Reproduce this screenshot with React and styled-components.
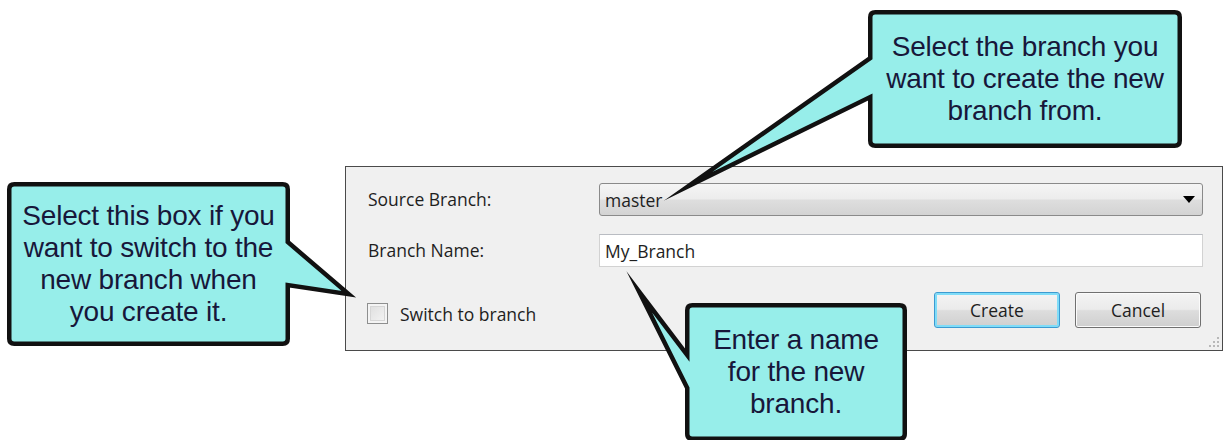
import React from "react";
import styled, { createGlobalStyle } from "styled-components";

const GlobalStyle = createGlobalStyle`
  html, body {
    margin: 0;
    padding: 0;
    background: #ffffff;
  }
  body {
    font-family: "Open Sans", "Liberation Sans", sans-serif;
  }
  * {
    box-sizing: border-box;
  }
`;

const Stage = styled.div`
  position: relative;
  width: 1225px;
  height: 440px;
  overflow: hidden;
  background: #ffffff;
  padding: 166px 0 0 345px;
`;

const Dialog = styled.div`
  position: relative;
  width: 878px;
  height: 185px;
  border: 1px solid #4a4a4a;
  background: #f0f0f0;
  padding: 16px 19px 0 22px;
  display: flex;
  flex-direction: column;
  font-size: 17.5px;
  color: #1e1e1e;
`;

const Fields = styled.div`
  display: grid;
  grid-template-columns: 231px 1fr;
  row-gap: 18px;
  align-items: center;
`;

const Label = styled.span`
  line-height: 1;
`;

const Combo = styled.div`
  height: 33px;
  border: 1px solid #8a8a8a;
  border-radius: 3px;
  background: linear-gradient(#f5f5f5 0%, #ececec 48%, #dedede 52%, #d3d3d3 100%);
  display: flex;
  align-items: center;
  justify-content: space-between;
  padding: 0 7px 0 5px;
`;

const Arrow = styled.span`
  width: 0;
  height: 0;
  border-left: 6px solid transparent;
  border-right: 6px solid transparent;
  border-top: 7px solid #000000;
`;

const TextBox = styled.div`
  height: 33px;
  background: #ffffff;
  border: 1px solid #d2d2d2;
  border-top-color: #b9bcc2;
  display: flex;
  align-items: center;
  padding-left: 5px;
`;

const Footer = styled.div`
  margin-top: 25px;
  display: flex;
  align-items: center;
  justify-content: space-between;
  padding-right: 2px;
`;

const CheckRow = styled.label`
  display: flex;
  align-items: center;
  gap: 12px;
  margin-left: -1px;
  padding-top: 7px;
`;

const CheckBox = styled.span`
  width: 21px;
  height: 21px;
  border: 1px solid #8e8f8f;
  background: linear-gradient(135deg, #dcdcdc, #f6f6f6);
  box-shadow: inset 0 0 0 2px #f4f4f4, inset 0 0 0 3px #d6d6d6;
`;

const Buttons = styled.div`
  display: flex;
  gap: 15px;
`;

const Button = styled.div`
  width: 126px;
  height: 36px;
  border-radius: 3px;
  border: 1px solid ${p => (p.$focused ? "#3c9ad0" : "#707070")};
  box-shadow: ${p =>
    p.$focused ? "inset 0 0 0 2px #7fdcf8" : "inset 0 0 0 1px #fbfbfb"};
  background: linear-gradient(#f4f4f4 0%, #ebebeb 48%, #dddddd 52%, #cfcfcf 100%);
  display: flex;
  align-items: center;
  justify-content: center;
`;

const Grip = styled.svg`
  position: absolute;
  right: 2px;
  bottom: 2px;
`;

const CalloutBox = styled.div`
  position: absolute;
  left: ${p => p.$x}px;
  top: ${p => p.$y}px;
  width: ${p => p.$w}px;
  height: ${p => p.$h}px;
  display: flex;
  align-items: center;
  justify-content: center;
  text-align: center;
  font-family: "Liberation Sans", Arial, sans-serif;
  font-size: 28px;
  line-height: 32px;
  letter-spacing: -0.2px;
  color: #17173a;
`;

const Bubble = styled.svg`
  position: absolute;
  left: 0;
  top: 0;
  overflow: visible;
`;

const CalloutText = styled.div`
  position: relative;
`;

const STROKE = 4.5;

// move the tip back so the miter spike ends on the measured point
function innerTip(tip, a, b, half) {
  const n = v => {
    const l = Math.hypot(v[0], v[1]);
    return [v[0] / l, v[1] / l];
  };
  const u1 = n([a[0] - tip[0], a[1] - tip[1]]);
  const u2 = n([b[0] - tip[0], b[1] - tip[1]]);
  const bis = n([u1[0] + u2[0], u1[1] + u2[1]]);
  const s = Math.abs(u1[0] * bis[1] - u1[1] * bis[0]);
  const ext = half / s;
  return [tip[0] + bis[0] * ext, tip[1] + bis[1] * ext];
}

function bubblePath(w, h, tail) {
  const i = STROKE / 2;
  const r = 5;
  const L = i, T = i, R = w - i, B = h - i;
  const edgeX = tail.side === "left" ? L : R;
  const tip = innerTip(tail.tip, [edgeX, tail.y1], [edgeX, tail.y2], i);
  let d = `M ${L + r} ${T} H ${R - r} Q ${R} ${T} ${R} ${T + r} `;
  if (tail.side === "right") {
    d += `V ${tail.y1} L ${tip[0]} ${tip[1]} L ${R} ${tail.y2} `;
  }
  d += `V ${B - r} Q ${R} ${B} ${R - r} ${B} H ${L + r} Q ${L} ${B} ${L} ${B - r} `;
  if (tail.side === "left") {
    d += `V ${tail.y2} L ${tip[0]} ${tip[1]} L ${L} ${tail.y1} `;
  }
  d += `V ${T + r} Q ${L} ${T} ${L + r} ${T} Z`;
  return d;
}

const Callout = ({ x, y, w, h, side, y1, y2, tip, children }) => {
  const tail = {
    side,
    y1: y1 - y,
    y2: y2 - y,
    tip: [tip[0] - x, tip[1] - y]
  };
  return (
    <CalloutBox $x={x} $y={y} $w={w} $h={h}>
      <Bubble width={w} height={h}>
        <path
          d={bubblePath(w, h, tail)}
          fill="#97eeea"
          stroke="#111111"
          strokeWidth={STROKE}
          strokeLinejoin="miter"
          strokeMiterlimit={60}
        />
      </Bubble>
      <CalloutText>{children}</CalloutText>
    </CalloutBox>
  );
};

const App = () => (
  <>
    <GlobalStyle />
    <Stage>
      <Dialog>
        <Fields>
          <Label>Source Branch:</Label>
          <Combo>
            <span>master</span>
            <Arrow />
          </Combo>
          <Label>Branch Name:</Label>
          <TextBox>My_Branch</TextBox>
        </Fields>
        <Footer>
          <CheckRow>
            <CheckBox />
            <span>Switch to branch</span>
          </CheckRow>
          <Buttons>
            <Button $focused>Create</Button>
            <Button>Cancel</Button>
          </Buttons>
        </Footer>
        <Grip width="12" height="12" viewBox="0 0 12 12">
          {[[9, 1], [9, 5], [5, 5], [9, 9], [5, 9], [1, 9]].map(([cx, cy]) => (
            <rect key={`${cx}-${cy}`} x={cx} y={cy} width="2" height="2" fill="#b8b8b8" />
          ))}
        </Grip>
      </Dialog>

      <Callout x={868} y={10} w={314} h={138} side="left" y1={58} y2={97} tip={[660, 203]}>
        Select the branch you
        <br />
        want to create the new
        <br />
        branch from.
      </Callout>

      <Callout x={7} y={182} w={283} h={164} side="right" y1={242} y2={285} tip={[357, 298]}>
        Select this box if you
        <br />
        want to switch to the
        <br />
        new branch when
        <br />
        you create it.
      </Callout>

      <Callout x={685} y={303} w={222} h={138} side="left" y1={355} y2={388} tip={[622, 264]}>
        Enter a name
        <br />
        for the new
        <br />
        branch.
      </Callout>
    </Stage>
  </>
);

export default App;
